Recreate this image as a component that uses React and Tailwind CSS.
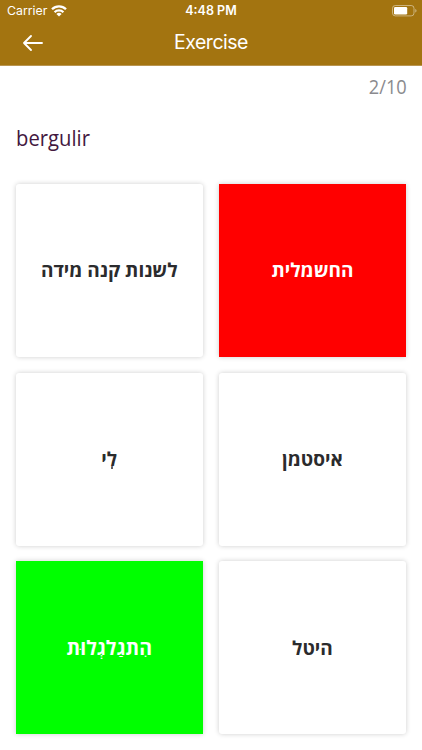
import React from 'react';

const answers = [
  { id: 1, text: 'לשנות קנה מידה', state: 'idle' },
  { id: 2, text: 'החשמלית', state: 'wrong' },
  { id: 3, text: 'לִי', state: 'idle', vowelDot: true },
  { id: 4, text: 'איסטמן', state: 'idle' },
  { id: 5, text: 'הִתגַלגְלוּת', state: 'correct' },
  { id: 6, text: 'היטל', state: 'idle' },
];

const cardStyles = {
  idle: 'bg-white text-[#2b2b2d] text-[19px] rounded-[3px]',
  wrong: 'bg-[#ff0000] text-white text-[19px]',
  correct: 'bg-[#00ff00] text-white text-[19.500px]',
};

const WifiIcon = () => (
  <svg width="16" height="12" viewBox="0 0 16 12" fill="none" stroke="#fff" strokeWidth="2.3">
    <path d="M1 4.300a10 10 0 0 1 14 0" />
    <path d="M3.600 7.200a6.300 6.300 0 0 1 8.800 0" />
    <path d="M8 11.600 5.400 9.100a3.700 3.700 0 0 1 5.200 0z" fill="#fff" stroke="none" />
  </svg>
);

const BatteryIcon = () => (
  <svg width="25" height="12" viewBox="0 0 25 12" fill="none">
    <rect x="0.5" y="0.5" width="21.500" height="10.4" rx="2.8" stroke="#fff" strokeOpacity="0.45" />
    <rect x="2" y="2" width="13.2" height="7.4" rx="1.2" fill="#fff" />
    <path d="M23.300 4v3.6c.8-.3 1.2-1 1.2-1.8s-.4-1.500-1.200-1.800z" fill="#fff" fillOpacity="0.5" />
  </svg>
);

const StatusBar = () => (
  <div className="grid grid-cols-3 items-center h-[22px] px-[7px] text-white">
    <div className="flex items-center gap-[4px] text-[12.300px]">
      <span>Carrier</span>
      <WifiIcon />
    </div>
    <div className="text-center text-[12.500px] font-semibold whitespace-nowrap">4:48 PM</div>
    <div className="flex justify-end -mr-[2px]">
      <BatteryIcon />
    </div>
  </div>
);

const Header = () => (
  <header className="h-[66px] bg-[#a37410] border-b border-[#b99550] font-[Inter,sans-serif]">
    <StatusBar />
    <div className="grid grid-cols-3 items-center h-[42px] px-[22px] text-white">
      <button aria-label="Back" className="w-[22px]">
        <svg width="22" height="18" viewBox="0 0 22 18" fill="none" stroke="#fff" strokeWidth="1.9" strokeLinecap="round" strokeLinejoin="round">
          <path d="M9 2 2 9l7 7M2 9h18" />
        </svg>
      </button>
      <h1 className="text-center text-[19.500px] tracking-[-0.5px]">Exercise</h1>
    </div>
  </header>
);

const AnswerCard = ({ text, state, vowelDot }) => (
  <button
    dir="rtl"
    className={`flex items-center justify-center h-[173px] shadow-[0_0_5px_rgba(0,0,0,0.2)] font-bold ${cardStyles[state]}`}
  >
    <span className="relative">
      {text}
      {vowelDot && <span className="absolute right-[4px] bottom-[4px] size-[2px] rounded-full bg-[#2b2b2d]" />}
    </span>
  </button>
);

const App = () => {
  return (
    <div className="h-[750px] bg-white overflow-hidden font-['Open_Sans',sans-serif]">
      <Header />
      <main className="pl-[15.500px] pr-[15.800px]">
        {/* Progress */}
        <div className="pt-[7px] text-right text-[20px] leading-7 text-[#8a8a8e] origin-right scale-x-[0.91]">2/10</div>

        {/* Word to translate */}
        <h2 className="mt-[20px] text-[22px] leading-8 text-[#43183f] origin-left scale-x-[0.92]">bergulir</h2>

        {/* Answers */}
        <div className="mt-[31px] grid grid-cols-2 gap-x-[15.600px] gap-y-[15.700px]">
          {answers.map(answer => (
            <AnswerCard key={answer.id} text={answer.text} state={answer.state} vowelDot={answer.vowelDot} />
          ))}
        </div>
      </main>
    </div>
  );
};

export default App;
